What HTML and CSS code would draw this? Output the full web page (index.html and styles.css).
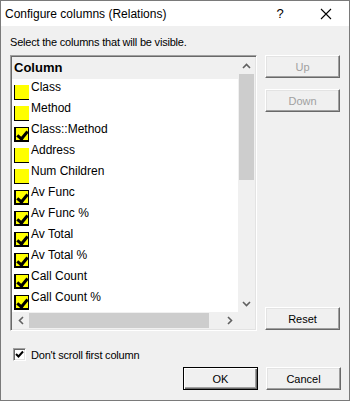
FILE: index.html
```html
<!DOCTYPE html>
<html lang="en">
<head>
  <meta charset="UTF-8">
  <title>Configure columns (Relations)</title>
  <link rel="stylesheet" href="styles.css">
</head>
<body>
  <div class="window">
    <div class="titlebar">
      <span class="title">Configure columns (Relations)</span>
      <span class="cap-btn">?</span>
      <span class="cap-btn">
        <svg width="12" height="12" viewBox="0 0 12 12"><path d="M1 1L11 11M11 1L1 11" stroke="#000" stroke-width="1.1" fill="none"/></svg>
      </span>
    </div>
    <div class="content">
      <div class="prompt">Select the columns that will be visible.</div>
      <div class="main">
        <div class="listbox">
          <div class="list">
            <div class="list-head">Column</div>
            <ul class="rows">
              <li><span class="chk"></span><span>Class</span></li>
              <li><span class="chk"></span><span>Method</span></li>
              <li><span class="chk on"></span><span>Class::Method</span></li>
              <li><span class="chk"></span><span>Address</span></li>
              <li><span class="chk"></span><span>Num Children</span></li>
              <li><span class="chk on"></span><span>Av Func</span></li>
              <li><span class="chk on"></span><span>Av Func %</span></li>
              <li><span class="chk on"></span><span>Av Total</span></li>
              <li><span class="chk on"></span><span>Av Total %</span></li>
              <li><span class="chk on"></span><span>Call Count</span></li>
              <li><span class="chk on"></span><span>Call Count %</span></li>
            </ul>
          </div>
          <div class="vscroll">
            <span class="arrow"><svg width="9" height="6" viewBox="0 0 9 6"><path d="M1 5L4.5 1.5L8 5" stroke="#606060" stroke-width="1.6" fill="none"/></svg></span>
            <div class="vtrack"><div class="vthumb"></div></div>
            <span class="arrow"><svg width="9" height="6" viewBox="0 0 9 6"><path d="M1 1L4.5 4.5L8 1" stroke="#606060" stroke-width="1.6" fill="none"/></svg></span>
          </div>
          <div class="hscroll">
            <span class="arrow"><svg width="6" height="9" viewBox="0 0 6 9"><path d="M5 1L1.5 4.5L5 8" stroke="#606060" stroke-width="1.6" fill="none"/></svg></span>
            <div class="htrack"><div class="hthumb"></div></div>
            <span class="arrow"><svg width="6" height="9" viewBox="0 0 6 9"><path d="M1 1L4.5 4.5L1 8" stroke="#606060" stroke-width="1.6" fill="none"/></svg></span>
          </div>
          <div class="corner"></div>
        </div>
        <div class="side">
          <button class="btn" disabled>Up</button>
          <button class="btn" disabled>Down</button>
          <div class="spacer"></div>
          <button class="btn">Reset</button>
        </div>
      </div>
      <label class="option">
        <span class="cbox">
          <svg width="9" height="9" viewBox="0 0 9 9"><path d="M1 4L3.5 6.5L8 1.5" stroke="#000" stroke-width="2" fill="none"/></svg>
        </span>
        Don't scroll first column
      </label>
      <div class="footer">
        <button class="btn default">OK</button>
        <button class="btn">Cancel</button>
      </div>
    </div>
  </div>
</body>
</html>
```

FILE: styles.css
```css
* {
  margin: 0;
  padding: 0;
  box-sizing: border-box;
}
body {
  font-family: "Liberation Sans", Arial, sans-serif;
  background: #f0f0f0;
}
.window {
  width: 350px;
  height: 401px;
  border: 1px solid #7a7a7a;
  background: #f0f0f0;
  display: flex;
  flex-direction: column;
  overflow: hidden;
}
.titlebar {
  height: 25px;
  background: #fff;
  display: flex;
  align-items: center;
  padding-left: 4px;
}
.title {
  flex: 1;
  font-size: 12px;
  color: #000;
}
.cap-btn {
  width: 46px;
  height: 25px;
  display: flex;
  align-items: center;
  justify-content: center;
  font-size: 13px;
}
.content {
  padding: 0 8px 0 9px;
  display: flex;
  flex-direction: column;
}
.prompt {
  margin-top: 10px;
  font-size: 11px;
  letter-spacing: -0.2px;
  line-height: 13px;
}
.main {
  margin-top: 6px;
  display: flex;
}
.listbox {
  width: 247px;
  height: 276px;
  border: 1px solid;
  border-color: #a0a0a0 #fff #fff #a0a0a0;
  box-shadow: inset 1px 1px #696969, inset -1px -1px #e3e3e3;
  padding: 1px;
  display: grid;
  grid-template-columns: 1fr 17px;
  grid-template-rows: 1fr 17px;
  background: #fff;
}
.list {
  overflow: hidden;
  background: #fff;
}
.list-head {
  height: 22px;
  background: #f0f0f0;
  font-weight: bold;
  font-size: 13px;
  line-height: 22px;
  padding-left: 2px;
}
.rows {
  list-style-type: none;
}
.rows li {
  height: 21px;
  display: flex;
  align-items: flex-start;
  font-size: 12px;
  line-height: 15px;
  padding-left: 2px;
}
.rows li span:last-child {
  margin-top: 1px;
}
.chk {
  width: 15px;
  height: 15px;
  margin-right: 2px;
  margin-top: 6px;
  background: #ffff00;
  border-left: 1px solid #000;
  border-bottom: 1px solid #000;
  position: relative;
  flex: none;
}
.chk.on {
  border: 1px solid #000;
  border-left-width: 2px;
  border-bottom-width: 2px;
}
.chk.on::after {
  content: "";
  position: absolute;
  left: 3px;
  top: 1px;
  width: 4px;
  height: 8px;
  border: solid #000;
  border-width: 0 3px 3px 0;
  transform: rotate(40deg);
}
.vscroll {
  background: #f0f0f0;
  display: flex;
  flex-direction: column;
}
.hscroll {
  background: #f0f0f0;
  display: flex;
}
.arrow {
  width: 17px;
  height: 17px;
  flex: none;
  display: flex;
  align-items: center;
  justify-content: center;
}
.vtrack {
  flex: 1;
}
.vthumb {
  height: 106px;
  margin: 0 1px;
  background: #cdcdcd;
}
.htrack {
  flex: 1;
}
.hthumb {
  width: 180px;
  margin: 1px 0;
  height: 15px;
  background: #cdcdcd;
}
.corner {
  background: #f0f0f0;
}
.side {
  margin-left: 8px;
  width: 75px;
  display: flex;
  flex-direction: column;
  gap: 11px;
}
.spacer {
  flex: 1;
}
.btn {
  width: 75px;
  height: 23px;
  font-family: "Liberation Sans", Arial, sans-serif;
  font-size: 11px;
  color: #000;
  background: #f0f0f0;
  border: 1px solid;
  border-color: #fff #696969 #696969 #fff;
  box-shadow: inset -1px -1px #a0a0a0, inset 1px 1px #e3e3e3;
}
.btn:disabled {
  color: #a0a0a0;
}
.side .btn:last-child {
  margin-bottom: 1px;
}
.btn.default {
  border: 1px solid #000;
  box-shadow: inset 1px 1px #fff, inset -1px -1px #696969, inset -2px -2px #a0a0a0;
}
.option {
  margin-top: 17px;
  margin-left: 3px;
  display: flex;
  align-items: center;
  gap: 5px;
  font-size: 11px;
  letter-spacing: -0.2px;
  height: 13px;
}
.cbox {
  width: 13px;
  height: 13px;
  background: #fff;
  border: 1px solid;
  border-color: #a0a0a0 #fff #fff #a0a0a0;
  box-shadow: inset 1px 1px #696969, inset -1px -1px #e3e3e3;
  display: flex;
  align-items: center;
  justify-content: center;
}
.footer {
  margin-top: 6px;
  display: flex;
  justify-content: flex-end;
  gap: 8px;
}
```
